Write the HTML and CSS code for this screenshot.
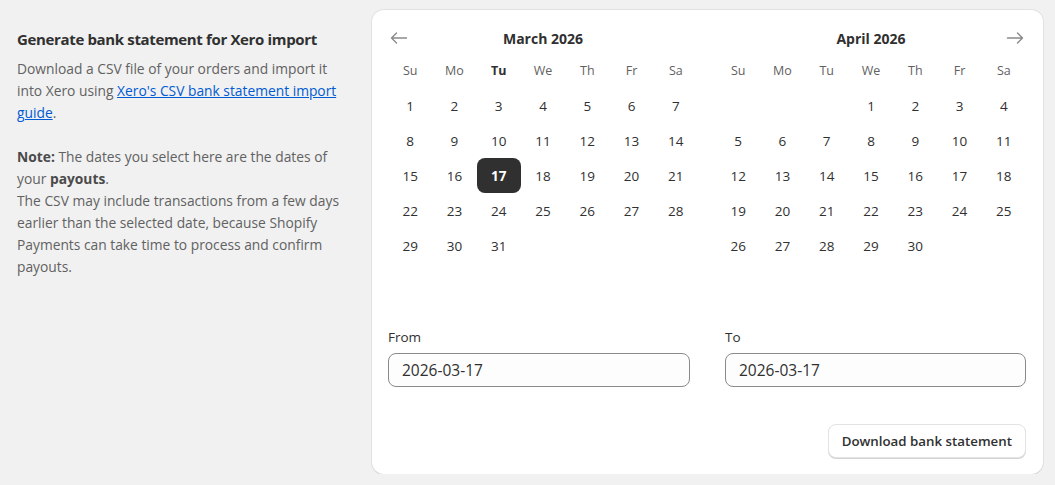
FILE: index.html
```html
<!DOCTYPE html>
<html lang="en">
<head>
<meta charset="utf-8">
<title>Generate bank statement for Xero import</title>
<link rel="stylesheet" href="styles.css">
</head>
<body>
<div class="page">
  <section class="intro">
    <h2 class="intro-title">Generate bank statement for Xero import</h2>
    <p class="intro-text">Download a CSV file of your orders and import it into Xero using <a href="#" class="link">Xero's CSV bank statement import guide</a>.</p>
    <p class="intro-text"><strong>Note:</strong> The dates you select here are the dates of your <strong>payouts</strong>.<br>The CSV may include transactions from a few days earlier than the selected date, because Shopify Payments can take time to process and confirm payouts.</p>
  </section>

  <section class="card">
    <div class="months">
      <div class="month">
        <div class="month-head">
          <button class="nav" aria-label="Previous month">
            <svg viewBox="0 0 20 20" width="20" height="20"><path d="M17.5 10H2.5M7.5 5 2.5 10 7.5 15" fill="none" stroke="currentColor" stroke-width="1.4" stroke-linecap="round" stroke-linejoin="round"/></svg>
          </button>
          <div class="month-title">March 2026</div>
          <span class="nav-spacer"></span>
        </div>
        <div class="grid">
          <span class="wd">Su</span><span class="wd">Mo</span><span class="wd today">Tu</span><span class="wd">We</span><span class="wd">Th</span><span class="wd">Fr</span><span class="wd">Sa</span>
          <span class="d">1</span><span class="d">2</span><span class="d">3</span><span class="d">4</span><span class="d">5</span><span class="d">6</span><span class="d">7</span>
          <span class="d">8</span><span class="d">9</span><span class="d">10</span><span class="d">11</span><span class="d">12</span><span class="d">13</span><span class="d">14</span>
          <span class="d">15</span><span class="d">16</span><span class="d sel">17</span><span class="d">18</span><span class="d">19</span><span class="d">20</span><span class="d">21</span>
          <span class="d">22</span><span class="d">23</span><span class="d">24</span><span class="d">25</span><span class="d">26</span><span class="d">27</span><span class="d">28</span>
          <span class="d">29</span><span class="d">30</span><span class="d">31</span>
        </div>
      </div>
      <div class="month">
        <div class="month-head">
          <span class="nav-spacer"></span>
          <div class="month-title">April 2026</div>
          <button class="nav" aria-label="Next month">
            <svg viewBox="0 0 20 20" width="20" height="20"><path d="M2.5 10h15M12.5 5l5 5-5 5" fill="none" stroke="currentColor" stroke-width="1.4" stroke-linecap="round" stroke-linejoin="round"/></svg>
          </button>
        </div>
        <div class="grid">
          <span class="wd">Su</span><span class="wd">Mo</span><span class="wd">Tu</span><span class="wd">We</span><span class="wd">Th</span><span class="wd">Fr</span><span class="wd">Sa</span>
          <span class="e"></span><span class="e"></span><span class="e"></span><span class="d">1</span><span class="d">2</span><span class="d">3</span><span class="d">4</span>
          <span class="d">5</span><span class="d">6</span><span class="d">7</span><span class="d">8</span><span class="d">9</span><span class="d">10</span><span class="d">11</span>
          <span class="d">12</span><span class="d">13</span><span class="d">14</span><span class="d">15</span><span class="d">16</span><span class="d">17</span><span class="d">18</span>
          <span class="d">19</span><span class="d">20</span><span class="d">21</span><span class="d">22</span><span class="d">23</span><span class="d">24</span><span class="d">25</span>
          <span class="d">26</span><span class="d">27</span><span class="d">28</span><span class="d">29</span><span class="d">30</span>
        </div>
      </div>
    </div>

    <div class="fields">
      <label class="field">
        <span class="field-label">From</span>
        <span class="input">2026-03-17</span>
      </label>
      <label class="field">
        <span class="field-label">To</span>
        <span class="input">2026-03-17</span>
      </label>
    </div>

    <div class="actions">
      <button class="btn">Download bank statement</button>
    </div>
  </section>
</div>
</body>
</html>
```

FILE: styles.css
```css
* { box-sizing: border-box; }

html, body {
  margin: 0;
  padding: 0;
  background: #f1f1f1;
}

body {
  font-family: "Open Sans", "Segoe UI", "Noto Sans", sans-serif;
  color: #303030;
  font-size: 13.8px;
}

.page {
  display: grid;
  grid-template-columns: 355px 671px;
  padding: 10px 12px 0 17px;
  align-items: start;
}

.intro {
  padding-top: 18px;
  padding-right: 32px;
}

.intro-title {
  margin: 0 0 8px;
  font-size: 15px;
  line-height: 22px;
  font-weight: 700;
  letter-spacing: -0.35px;
  color: #303030;
  white-space: nowrap;
}

.intro-text {
  margin: 0 0 22px;
  font-size: 13.8px;
  line-height: 22px;
  color: #616161;
}

.intro-text strong {
  color: #4a4a4a;
  font-weight: 700;
}

.link {
  color: #005bd3;
  text-decoration: underline;
}

.card {
  width: 671px;
  height: 464px;
  background: #ffffff;
  border-radius: 12px;
  box-shadow: 0 1px 0 0 rgba(26, 26, 26, 0.07), 0 0 0 1px rgba(0, 0, 0, 0.06);
  padding: 14px 17px 16px 16px;
  display: flex;
  flex-direction: column;
}

.months {
  display: grid;
  grid-template-columns: 310px 310px;
  column-gap: 18px;
}

.month-head {
  display: grid;
  grid-template-columns: 22px 1fr 22px;
  align-items: center;
  height: 28px;
  margin-bottom: 1px;
}

.month-title {
  text-align: center;
  font-size: 14px;
  font-weight: 700;
  color: #303030;
}

.nav {
  width: 22px;
  height: 28px;
  padding: 0;
  border: 0;
  background: transparent;
  color: #8a8a8a;
  display: flex;
  align-items: center;
  justify-content: center;
  cursor: pointer;
}

.nav svg { display: block; }

.nav-spacer { display: block; }

.grid {
  display: grid;
  grid-template-columns: repeat(7, 1fr);
  grid-auto-rows: 35px;
}

.wd, .d, .e {
  display: flex;
  align-items: center;
  justify-content: center;
}

.wd {
  font-size: 12.5px;
  color: #616161;
}

.wd.today {
  font-weight: 700;
  color: #303030;
}

.d {
  font-size: 13.5px;
  color: #303030;
  border-radius: 8px;
}

.d.sel {
  background: #303030;
  color: #ffffff;
  font-weight: 700;
}

.fields {
  display: grid;
  grid-template-columns: 302px 301px;
  column-gap: 35px;
  margin-top: 64px;
}

.field {
  display: flex;
  flex-direction: column;
}

.field-label {
  font-size: 13.5px;
  line-height: 20px;
  color: #303030;
  margin-bottom: 6px;
}

.input {
  display: flex;
  align-items: center;
  height: 34px;
  padding: 0 13px;
  border: 1px solid #8a8a8a;
  border-radius: 8px;
  background: #fdfdfd;
  font-size: 15.5px;
  color: #303030;
}

.actions {
  display: flex;
  justify-content: flex-end;
  margin-top: auto;
}

.btn {
  height: 34px;
  padding: 0 13px;
  border: 1px solid #e3e3e3;
  border-radius: 8px;
  background: #ffffff;
  box-shadow: 0 1px 0 0 #d4d4d4;
  font-family: inherit;
  font-size: 13.3px;
  font-weight: 600;
  color: #303030;
  cursor: pointer;
}
```
